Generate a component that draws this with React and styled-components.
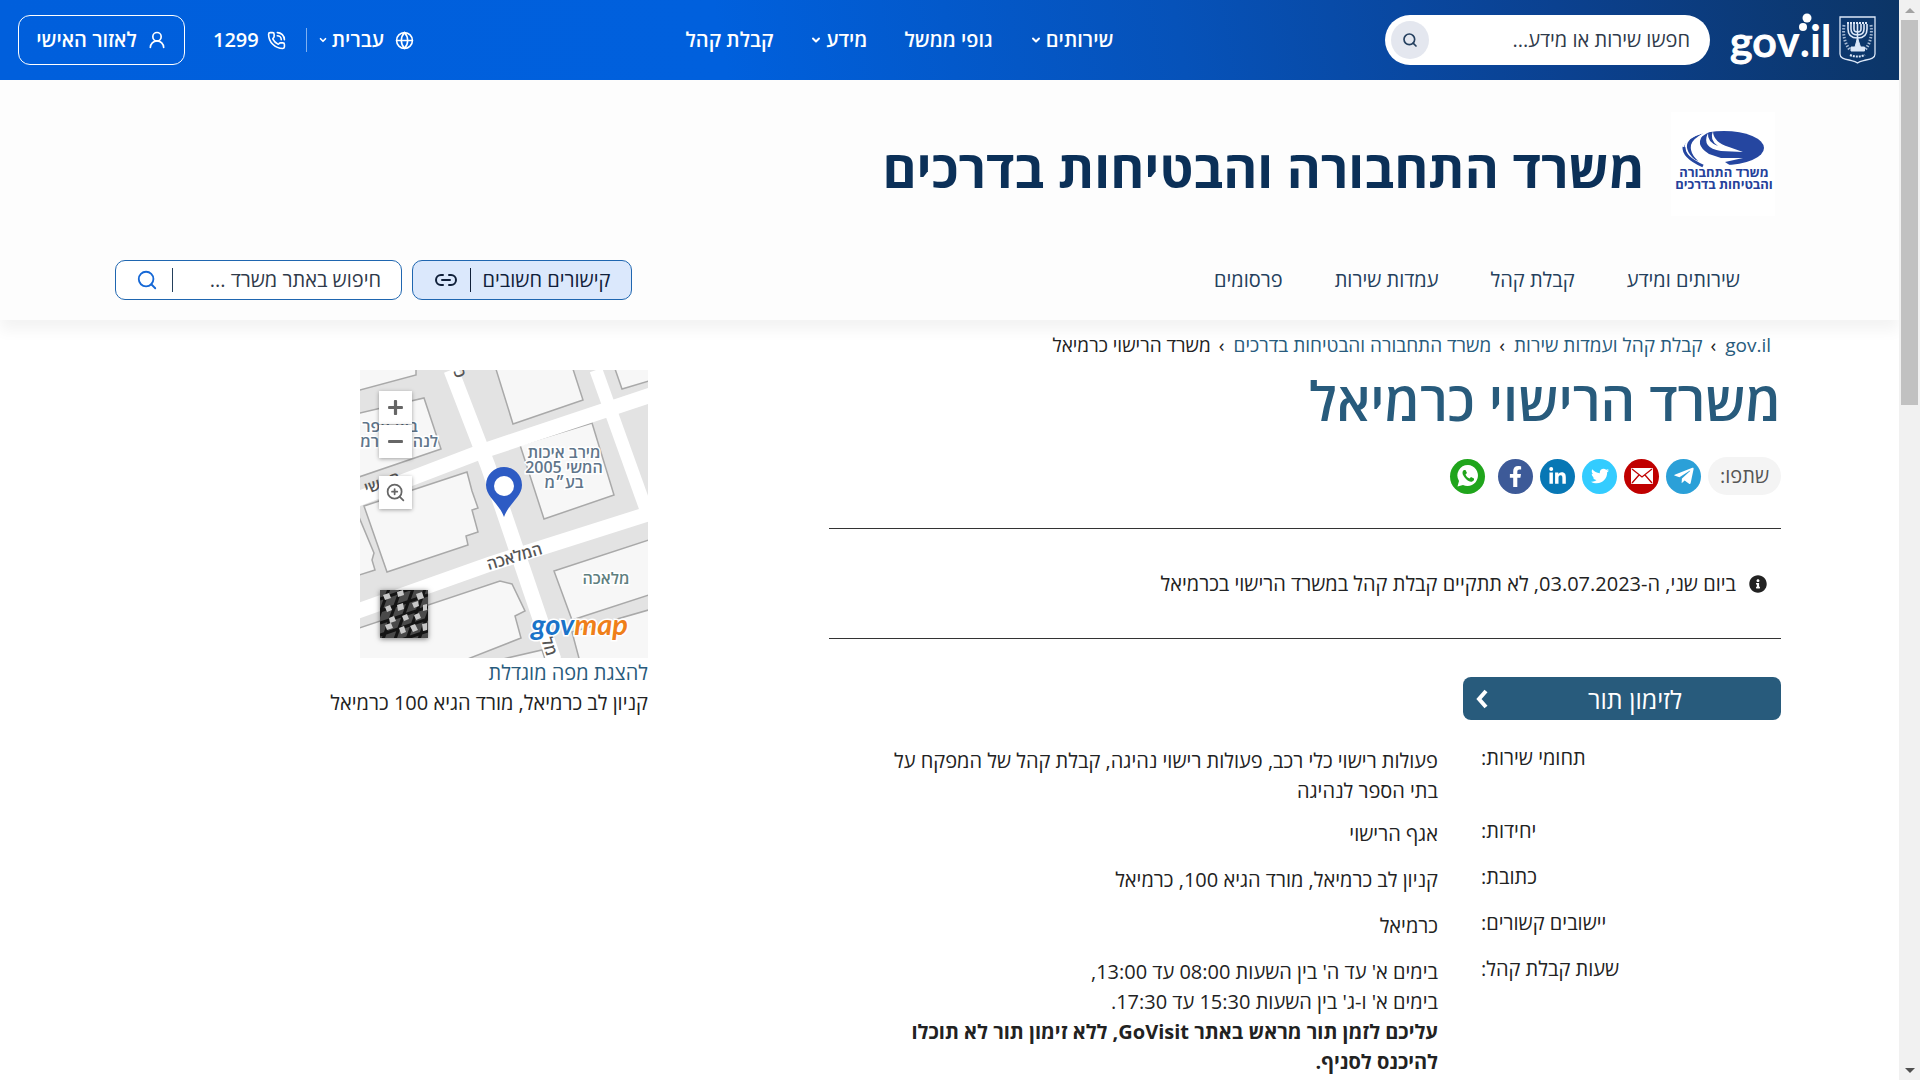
import React from "react";
import styled, { createGlobalStyle } from "styled-components";
import { Globe, PhoneCall, UserRound, Search, ChevronDown, Link2, ZoomIn } from "lucide-react";
import { FaTelegramPlane, FaTwitter, FaLinkedinIn, FaFacebookF, FaInfoCircle, FaPlus, FaMinus } from "react-icons/fa";

const GlobalStyle = createGlobalStyle`
  * { box-sizing: border-box; }
  body {
    margin: 0;
    background: #ffffff;
    color: #222222;
    font-family: "Open Sans", "Liberation Sans", sans-serif;
    font-size: 20px;
    line-height: 30px;
  }
  button, input { font: inherit; color: inherit; margin: 0; }
  button { cursor: pointer; }
  a { color: inherit; text-decoration: none; }
  b { font-weight: 700; }
  h1, p, ul, ol, dl, dd { margin: 0; padding: 0; }
  ul, ol { list-style: none; }
`;

const Shell = styled.div`
  display: grid;
  grid-template-columns: minmax(0, 1fr) 21px;
  min-height: 100vh;
`;

const Page = styled.div`
  min-width: 0;
`;

/* Scroll rail */
const Rail = styled.div`
  position: sticky;
  top: 0;
  height: 100vh;
  display: flex;
  flex-direction: column;
  align-items: center;
  background: #f1f1f1;
`;

const RailArrow = styled.span`
  width: 20px;
  height: 20px;
  display: grid;
  place-items: center;

  &::before {
    content: "";
    border: 5px solid transparent;
    border-top-width: 0;
    border-bottom-color: #a3a3a3;
    transform: ${(p) => (p.$down ? "rotate(180deg)" : "none")};
    ${(p) => p.$down && "border-bottom-color: #505050;"}
  }
`;

const RailTrack = styled.span`
  flex: 1;
  width: 17px;

  &::before {
    content: "";
    display: block;
    height: 37%;
    background: #c1c1c1;
  }
`;

/* Top bar */
const TopBar = styled.header`
  display: flex;
  align-items: center;
  justify-content: space-between;
  height: 80px;
  padding: 0 23px 0 18px;
  color: #ffffff;
  font-size: 20px;
  font-weight: 600;
  background: linear-gradient(260deg, #0c3566 0%, #0b4190 18%, #0652b9 38%, #0060dd 62%, #005fdc 100%);
`;

const BarGroup = styled.div`
  display: flex;
  align-items: center;
  gap: ${(p) => p.$gap}px;
`;

const BrandLink = styled.a`
  display: flex;
  align-items: center;
  gap: 9px;
`;

const SearchPill = styled.div`
  display: flex;
  align-items: center;
  width: 325px;
  height: 50px;
  padding: 0 20px 0 6px;
  border-radius: 25px;
  background: #ffffff;
  color: #3a4657;
`;

const SearchInput = styled.input`
  flex: 1;
  min-width: 0;
  border: 0;
  outline: 0;
  padding: 0;
  background: transparent;
  font-weight: 400;

  &::placeholder {
    color: #2f3a4a;
    opacity: 1;
  }
`;

const RoundButton = styled.button`
  display: grid;
  place-items: center;
  width: 38px;
  height: 38px;
  padding: 0;
  border: 0;
  border-radius: 50%;
  background: #e4e7ef;
  color: #25405f;
`;

const BarNav = styled.nav`
  display: flex;
  gap: 37px;
`;

const BarButton = styled.button`
  display: flex;
  align-items: center;
  gap: ${(p) => p.$gap || 4}px;
  padding: 0;
  border: 0;
  background: transparent;
`;

const BarLink = styled.a`
  display: flex;
  align-items: center;
  gap: 8px;
`;

const Divider = styled.span`
  width: 1px;
  height: 24px;
  background: ${(p) => p.$color || "#7fb0f0"};
`;

const AccountLink = styled.a`
  display: flex;
  align-items: center;
  justify-content: center;
  gap: 10px;
  width: 167px;
  height: 50px;
  border: 1px solid #ffffff;
  border-radius: 12px;
`;

/* Office masthead */
const Masthead = styled.section`
  height: 240px;
  padding: 32px 118px 20px 115px;
  display: flex;
  flex-direction: column;
  justify-content: space-between;
  background: #fdfdfd;
  box-shadow: 0 10px 14px rgba(0, 0, 0, 0.05);
`;

const OfficeLink = styled.a`
  display: flex;
  align-items: center;
  gap: 26px;
  padding-right: 6px;
  color: #0b3058;
  font-size: 52px;
  line-height: 64px;
  font-weight: 700;

  span {
    padding-top: 8px;
  }
`;

const OfficeRow = styled.div`
  display: flex;
  align-items: center;
  justify-content: space-between;
`;

const OfficeNav = styled.nav`
  display: flex;
  gap: 52px;
  padding-right: 41px;
  color: #24405c;
`;

const Tools = styled.div`
  display: flex;
  gap: 10px;
`;

const ToolButton = styled.button`
  display: flex;
  align-items: center;
  justify-content: center;
  gap: 12px;
  width: 220px;
  height: 40px;
  padding: 0;
  border: 1px solid #1f66b0;
  border-radius: 10px;
  background: #dbe8fc;
  color: #10203a;
`;

const ToolSearch = styled.div`
  display: flex;
  align-items: center;
  gap: 14px;
  width: 287px;
  height: 40px;
  padding: 0 20px;
  border: 1px solid #1f66b0;
  border-radius: 10px;
  background: #ffffff;
  color: #24405c;
`;

const PlainButton = styled.button`
  display: grid;
  place-items: center;
  padding: 0;
  border: 0;
  background: transparent;
  color: #1668d6;
`;

/* Content */
const Content = styled.main`
  padding: 10px 118px 0 115px;
`;

const Crumbs = styled.ol`
  display: flex;
  align-items: center;
  gap: 9px;
  padding-right: 10px;
  font-size: 19px;
  color: #285b7c;
`;

const Crumb = styled.li`
  display: flex;
  align-items: center;
  gap: 8px;
  color: ${(p) => (p.$current ? "#222222" : "inherit")};

  li + &::before {
    content: "›";
    color: #222222;
  }
`;

const Columns = styled.div`
  display: grid;
  grid-template-columns: 4fr 3fr;
`;

const Article = styled.article`
  min-width: 0;
`;

const Title = styled.h1`
  padding-top: 8px;
  color: #285b7c;
  font-size: 54px;
  line-height: 64px;
  font-weight: 600;
`;

const Share = styled.div`
  display: flex;
  align-items: center;
  gap: 7px;
  margin-top: 25px;
`;

const ShareLabel = styled.span`
  display: grid;
  place-items: center;
  width: 73px;
  height: 38px;
  border-radius: 19px;
  background: #f4f4f4;
  color: #555555;
`;

const ShareLink = styled.a`
  display: grid;
  place-items: center;
  width: 35px;
  height: 35px;
  border-radius: 50%;
  background: ${(p) => p.$color};
  color: #ffffff;
  margin-right: ${(p) => (p.$apart ? 6 : 0)}px;
`;

const Notice = styled.p`
  display: flex;
  align-items: center;
  gap: 13px;
  margin-top: 33px;
  height: 111px;
  padding-right: 14px;
  border: 1px solid #333333;
  border-width: 1px 0;
`;

const BookLink = styled.a`
  display: flex;
  align-items: center;
  width: 318px;
  height: 43px;
  margin-top: 38px;
  padding-left: 12px;
  border-radius: 8px;
  background: #285b7c;
  color: #ffffff;
  font-size: 25px;

  span {
    flex: 1;
    text-align: center;
  }
`;

const Details = styled.dl`
  margin-top: 23px;
`;

const DetailRow = styled.div`
  display: grid;
  grid-template-columns: 300px minmax(0, 560px);
  column-gap: 43px;
  min-height: 46px;
  padding-bottom: 10px;
`;

const Term = styled.dt`
  text-align: left;
`;

const Value = styled.dd`
  padding-top: 3px;
`;

const Side = styled.aside`
  padding: 10px 181px 0 0;
`;

const MapBox = styled.div`
  position: relative;
  width: 288px;
  height: 288px;
  overflow: hidden;
`;

const MapControls = styled.div`
  position: absolute;
  left: 19px;
  top: 20px;
  display: flex;
  flex-direction: column;
`;

const MapButton = styled.button`
  display: grid;
  place-items: center;
  width: 33px;
  height: 33px;
  padding: 0;
  margin-top: ${(p) => (p.$apart ? 18 : 1)}px;
  border: 0;
  background: #ffffff;
  color: #666666;
  box-shadow: 0 1px 4px rgba(0, 0, 0, 0.35);
`;

const LayerButton = styled.button`
  position: absolute;
  left: 20px;
  bottom: 20px;
  width: 48px;
  height: 48px;
  padding: 0;
  border: 0;
  box-shadow: 0 1px 5px rgba(0, 0, 0, 0.5);

  svg { display: block; }
`;

const MapLink = styled.a`
  display: block;
  color: #285b7c;
`;

function Emblem() {
  return (
    <svg width="37" height="48" viewBox="0 0 37 48" fill="none" stroke="#dbe7f8" aria-hidden="true">
      <path d="M1 1h35v37c0 4-4 5-9 6-4 1-6 1-8.500 3-2.500-2-4.500-2-8.500-3-5-1-9-2-9-6z" strokeWidth="1.300" />
      <path d="M9 8v5q0 9 9.500 9t9.500-9V8M12 8v5q0 6 6.500 6t6.500-6V8M15 8v5q0 3 3.500 3t3.500-3V8M18.500 7v24" strokeWidth="1.600" />
      <path d="M8 7h21" strokeWidth="2" strokeDasharray="2 1" />
      <path d="M18.500 22l3 9h4v4H12v-4h4z" fill="#dbe7f8" strokeWidth="1" />
      <path d="M5 9q-2 15 6 25M32 9q2 15-6 25" strokeWidth="3" strokeDasharray="1.500 1.500" opacity=".75" />
      <path d="M11 39q7 3 15 0" strokeWidth="2" strokeDasharray="2 1" />
    </svg>
  );
}

function GovLogo() {
  return (
    <svg width="100" height="60" viewBox="0 0 100 60" fill="#ffffff" aria-label="gov.il" role="img" overflow="visible">
      <text x="0" y="47" direction="ltr" fontFamily="Lato, sans-serif" fontSize="43" textAnchor="start">
        <tspan stroke="#ffffff" strokeWidth="1">go</tspan>
        <tspan fontWeight="900">v</tspan>
        <tspan fontWeight="700">.il</tspan>
      </text>
      <path d="M61 46L70 24" stroke="#ffffff" strokeWidth="8" strokeLinecap="round" opacity="0" />
      <circle cx="73" cy="17" r="4" />
      <circle cx="77" cy="8" r="4.500" />
    </svg>
  );
}

function OfficeLogo() {
  return (
    <svg width="104" height="104" viewBox="0 0 104 104" aria-hidden="true">
      <rect width="104" height="104" fill="#ffffff" />
      <ellipse cx="53" cy="36" rx="40" ry="17" fill="#2546a0" />
      <g fill="none" stroke="#ffffff">
        <path d="M36 19C10 25 8 38 30 54" strokeWidth="2" />
        <path d="M40 18C18 28 20 40 42 54" strokeWidth="2" />
      </g>
      <path d="M20 33Q22 26 34 21Q22 32 38 42L50 46H72L54 50L60 54H34Q18 44 20 33z" fill="#ffffff" />
      <path d="M37 21Q30 36 50 39L72 40L58 35Q42 30 42 19Q38 28 47 34Q36 30 37 21z" fill="#ffffff" />
      <path d="M13 34Q12 44 30 54H24Q4 42 14 30z" fill="#ffffff" />
      <path d="M13 35Q12 45 32 54" fill="none" stroke="#2546a0" strokeWidth="3" />
      <g fill="#26419a" fontFamily="'Open Sans', 'Liberation Sans', sans-serif" fontWeight="700" fontSize="13" textAnchor="middle">
        <text x="53" y="65">משרד התחבורה</text>
        <text x="53" y="77">והבטיחות בדרכים</text>
      </g>
    </svg>
  );
}

function MailGlyph() {
  return (
    <svg width="22" height="16" viewBox="0 0 22 16" aria-hidden="true">
      <rect width="22" height="16" rx="1" fill="#ffffff" />
      <path d="M1 1l10 8L21 1M1 15l7-8M21 15l-7-8" fill="none" stroke="#c00000" strokeWidth="1.300" />
    </svg>
  );
}

function WhatsAppGlyph() {
  return (
    <svg width="24" height="24" viewBox="0 0 24 24" aria-hidden="true">
      <path d="M12 1a10.500 10.500 0 0 0-9 16L1.500 22.500 7 21a10.500 10.500 0 1 0 5-20z" fill="#ffffff" />
      <path d="M8 6c-3 2-1 6 2 9s6 4 8 1v-1.500l-3-1.500-1.500 1.500c-2-.8-3.200-2-4-4L11 9 9.500 6z" fill="#20a51c" />
    </svg>
  );
}

function StreetMap() {
  return (
    <svg width="288" height="288" viewBox="0 0 288 288" aria-label="מפה" role="img">
      <rect width="288" height="288" fill="#e3e3e3" />
      <g fill="#f7f7f7" stroke="#a9a9a9" strokeWidth="1.500">
        <path d="M-4-4H56V5L-4 21z" />
        <path d="M-4 44L64 28 81 79-4 108z" />
        <path d="M135-4L153 54 223 30 212-4z" />
        <path d="M254-4L262 19 292 10V-4z" />
        <path d="M160 75L232 53 254 125 184 149z" />
        <path d="M4 136L107 102 112 121 118 138 112 140 118 162 106 166 108 175 27 202z" />
        <path d="M-4 140L14 183 12 190 15 200-4 206z" />
        <path d="M194 201L292 169V224L212 250z" />
        <path d="M-4 259L140 211 152 214 165 241 155 246 161 268 100 292H-4z" />
        <path d="M130 292L182 280 186 292z" />
        <path d="M212 262L292 239V292H220z" />
      </g>
      <g fill="none" stroke="#ffffff" strokeWidth="15">
        <path d="M-5 130L120 82 300 22" />
        <path d="M-5 242L130 194 288 144" />
        <path d="M91 0L128 96 194 290" />
        <path d="M236 0L288 145" strokeWidth="13" />
      </g>
      <g fill="#60758a" stroke="#ffffff" strokeWidth="3" paintOrder="stroke" fontFamily="'Open Sans', 'Liberation Sans', sans-serif" fontWeight="600" fontSize="16" textAnchor="middle">
        <text x="204" y="88">מירב איכות</text>
        <text x="204" y="103">המשי 2005</text>
        <text x="204" y="118">בע״מ</text>
        <text x="246" y="214" fill="#5f7f7f">מלאכה</text>
        <text x="30" y="62">בית ספר</text>
        <text x="28" y="77">לנהיגה כרמיאל</text>
      </g>
      <g fill="#555555" fontFamily="'Open Sans', 'Liberation Sans', sans-serif" fontWeight="600" fontSize="16" textAnchor="middle">
        <text transform="translate(156 192) rotate(-17)">המלאכה</text>
        <text transform="translate(24 118) rotate(-19)">המשי</text>
        <text transform="translate(184 278) rotate(72)">מל</text>
        <text transform="translate(94 3) rotate(72)">כו</text>
      </g>
      <path d="M144 147C139 133 126 127 126 115a18 18 0 0 1 36 0c0 12-13 18-18 32z" fill="#2d5bc4" />
      <circle cx="144" cy="116" r="10" fill="#ffffff" />
      <text x="171" y="265" direction="ltr" fontFamily="Lato, sans-serif" fontWeight="700" fontStyle="italic" fontSize="29" stroke="#ffffff" strokeWidth="3" paintOrder="stroke" fill="#1a73c9">
        gov<tspan fill="#ef7f1a">map</tspan>
      </text>
    </svg>
  );
}

function AerialThumb() {
  return (
    <svg width="48" height="48" viewBox="0 0 48 48" aria-hidden="true">
      <rect width="48" height="48" fill="#4a4a4a" />
      <path d="M0 9L48-7M0 21L48 5M0 33L48 17M0 45L48 29M0 57L48 41M10-4L-4 34M22-4L2 52M34-4L14 52M46-4L26 52M58-4L38 52" fill="none" stroke="#141414" strokeWidth="3" />
      <g fill="#c8c8c8">
        <path d="M3 5l6-2 2 5-6 2zM17 2l6-2 1 5-6 2zM36 4l6-2 2 6-6 2zM5 17l5-2 2 5-5 2zM17 15l6-2 1 6-6 2zM32 13l6-2 1 5-5 2zM43 15l4-1v6l-4 1zM9 28l5-2 2 5-6 2zM22 26l5-2 2 5-5 2zM34 25l5-2 2 5-5 2zM5 35l6-2 2 5-6 2zM19 38l5-2 2 6-5 2zM30 36l5-2 3 6-5 2zM42 34l5-1v7l-4 1z" />
      </g>
    </svg>
  );
}

const details = [
  { term: "תחומי שירות:", value: "פעולות רישוי כלי רכב, פעולות רישוי נהיגה, קבלת קהל של המפקח על בתי הספר לנהיגה" },
  { term: "יחידות:", value: "אגף הרישוי" },
  { term: "כתובת:", value: "קניון לב כרמיאל, מורד הגיא 100, כרמיאל" },
  { term: "יישובים קשורים:", value: "כרמיאל" },
  {
    term: "שעות קבלת קהל:",
    value: (
      <>
        בימים א' עד ה' בין השעות 08:00 עד 13:00,
        <br />
        בימים א' ו-ג' בין השעות 15:30 עד 17:30.
        <br />
        <b>עליכם לזמן תור מראש באתר GoVisit, ללא זימון תור לא תוכלו להיכנס לסניף.</b>
      </>
    ),
  },
];

const shares = [
  { name: "Telegram", color: "#2ba0d8", icon: <FaTelegramPlane size={22} /> },
  { name: "Email", color: "#c00000", icon: <MailGlyph /> },
  { name: "Twitter", color: "#33ccff", icon: <FaTwitter size={18} /> },
  { name: "LinkedIn", color: "#0777b5", icon: <FaLinkedinIn size={19} /> },
  { name: "Facebook", color: "#3d5a98", icon: <FaFacebookF size={21} /> },
  { name: "WhatsApp", color: "#20a51c", icon: <WhatsAppGlyph />, apart: true },
];

export default function App() {
  return (
    <Shell>
      <GlobalStyle />
      <Page dir="rtl" lang="he">
        <TopBar>
          <BarGroup $gap={20}>
            <BrandLink href="#" aria-label="gov.il">
              <Emblem />
              <GovLogo />
            </BrandLink>
            <SearchPill>
              <SearchInput type="text" aria-label="חיפוש" placeholder="חפשו שירות או מידע..." />
              <RoundButton aria-label="חפש"><Search size={16} strokeWidth={2.5} /></RoundButton>
            </SearchPill>
          </BarGroup>
          <BarNav>
            <BarButton>שירותים<ChevronDown size={12} strokeWidth={4} /></BarButton>
            <BarLink href="#">גופי ממשל</BarLink>
            <BarButton>מידע<ChevronDown size={12} strokeWidth={4} /></BarButton>
            <BarLink href="#">קבלת קהל</BarLink>
          </BarNav>
          <BarGroup $gap={20}>
            <BarGroup $gap={11}>
              <BarButton $gap={11}>
                <Globe size={19} />
                <BarGroup $gap={4}>עברית<ChevronDown size={10} strokeWidth={4} /></BarGroup>
              </BarButton>
              <Divider />
            </BarGroup>
            <BarGroup $gap={28}>
              <BarLink href="#"><PhoneCall size={19} />1299</BarLink>
              <AccountLink href="#"><UserRound size={20} />לאזור האישי</AccountLink>
            </BarGroup>
          </BarGroup>
        </TopBar>

        <Masthead>
          <OfficeLink href="#"><OfficeLogo /><span>משרד התחבורה והבטיחות בדרכים</span></OfficeLink>
          <OfficeRow>
            <OfficeNav>
              <a href="#">שירותים ומידע</a>
              <a href="#">קבלת קהל</a>
              <a href="#">עמדות שירות</a>
              <a href="#">פרסומים</a>
            </OfficeNav>
            <Tools>
              <ToolButton>קישורים חשובים<Divider $color="#10203a" /><Link2 size={24} /></ToolButton>
              <ToolSearch>
                <SearchInput type="text" aria-label="חיפוש באתר" placeholder="חיפוש באתר משרד ..." />
                <Divider $color="#24405c" />
                <PlainButton aria-label="חפש באתר"><Search size={22} /></PlainButton>
              </ToolSearch>
            </Tools>
          </OfficeRow>
        </Masthead>

        <Content>
          <Crumbs>
            <Crumb><a href="#">gov.il</a></Crumb>
            <Crumb><a href="#">קבלת קהל ועמדות שירות</a></Crumb>
            <Crumb><a href="#">משרד התחבורה והבטיחות בדרכים</a></Crumb>
            <Crumb $current>משרד הרישוי כרמיאל</Crumb>
          </Crumbs>
          <Columns>
            <Article>
              <Title>משרד הרישוי כרמיאל</Title>
              <Share>
                <ShareLabel>שתפו:</ShareLabel>
                {shares.map((s) => (
                  <ShareLink key={s.name} href="#" aria-label={s.name} $color={s.color} $apart={s.apart}>{s.icon}</ShareLink>
                ))}
              </Share>
              <Notice>
                <FaInfoCircle size={18} />
                <span>ביום שני, ה-03.07.2023, לא תתקיים קבלת קהל במשרד הרישוי בכרמיאל</span>
              </Notice>
              <BookLink href="#">
                <span>לזימון תור</span>
                <svg width="14" height="20" viewBox="0 0 14 20" fill="none" stroke="#ffffff" strokeWidth="4" aria-hidden="true">
                  <path d="M11 2L4 10l7 8" />
                </svg>
              </BookLink>
              <Details>
                {details.map((d) => (
                  <DetailRow key={d.term}>
                    <Term>{d.term}</Term>
                    <Value>{d.value}</Value>
                  </DetailRow>
                ))}
              </Details>
            </Article>
            <Side>
              <MapBox>
                <StreetMap />
                <MapControls>
                  <MapButton aria-label="הגדל"><FaPlus size={17} /></MapButton>
                  <MapButton aria-label="הקטן"><FaMinus size={17} /></MapButton>
                  <MapButton aria-label="מבט קרוב" $apart><ZoomIn size={21} /></MapButton>
                </MapControls>
                <LayerButton aria-label="תצלום אוויר"><AerialThumb /></LayerButton>
              </MapBox>
              <MapLink href="#">להצגת מפה מוגדלת</MapLink>
              <p>קניון לב כרמיאל, מורד הגיא 100 כרמיאל</p>
            </Side>
          </Columns>
        </Content>
      </Page>
      <Rail aria-hidden="true">
        <RailArrow />
        <RailTrack />
        <RailArrow $down />
      </Rail>
    </Shell>
  );
}
